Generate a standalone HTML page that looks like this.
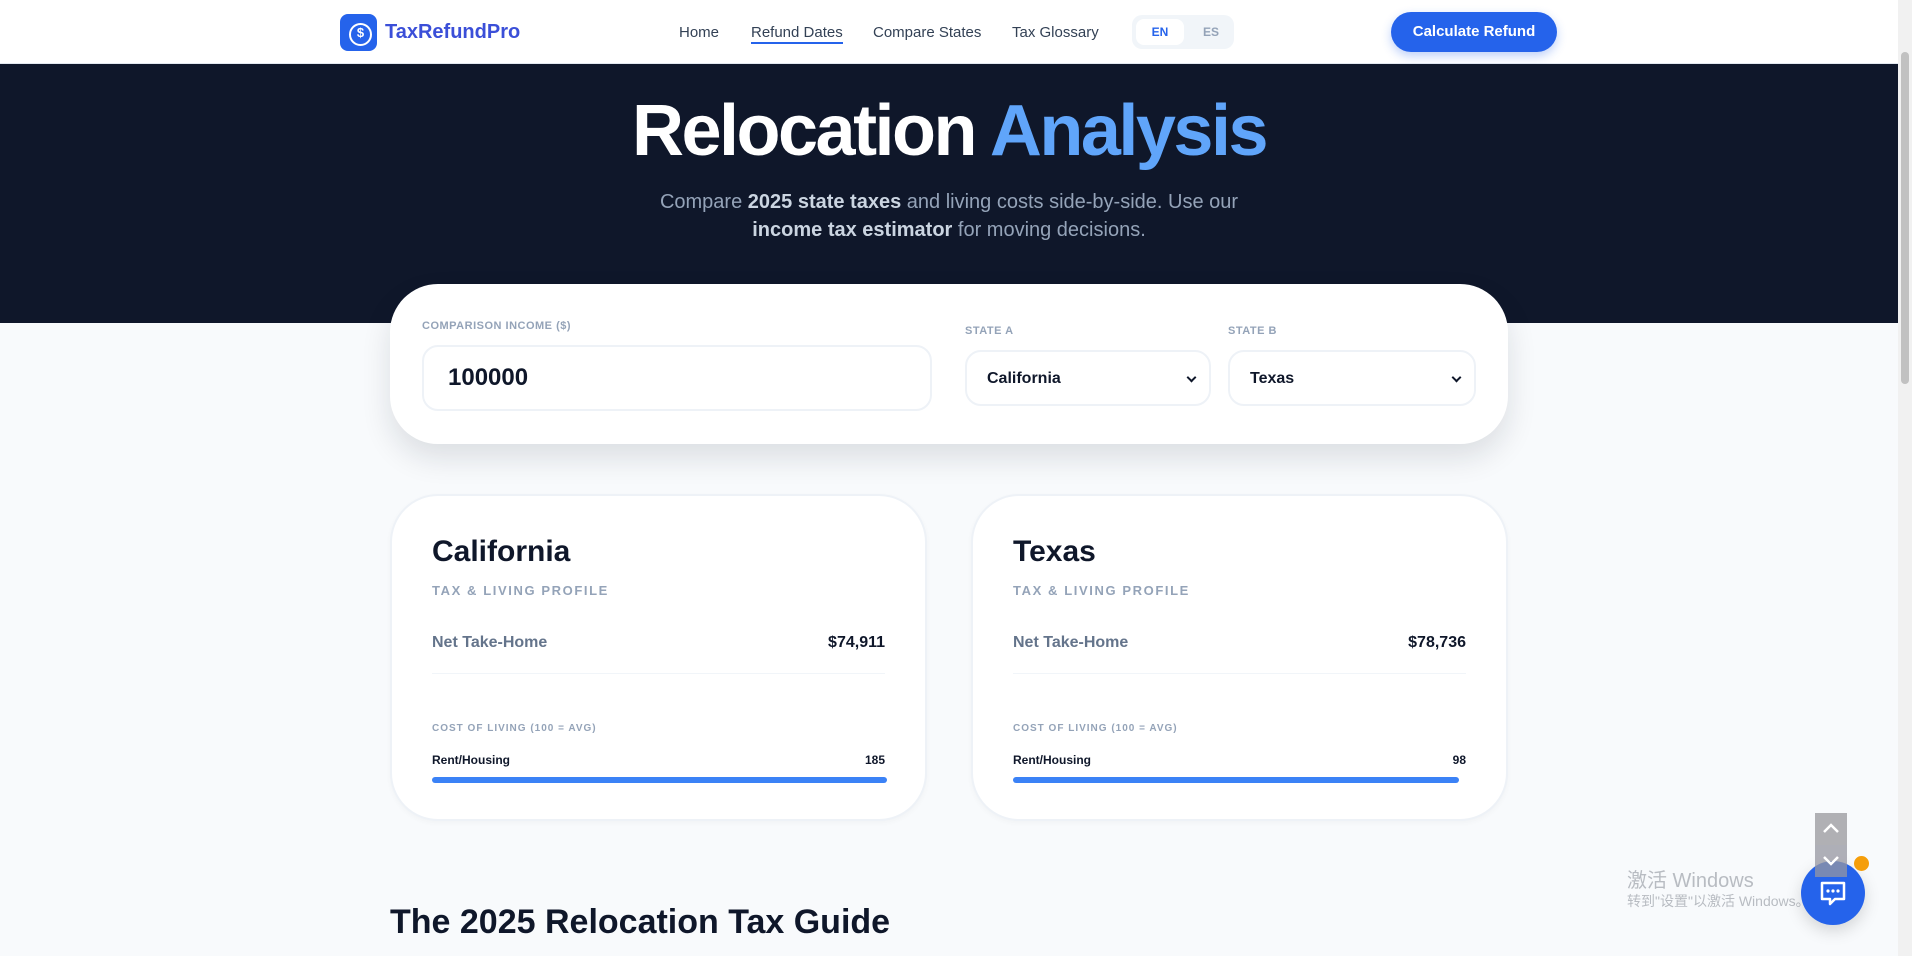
<!DOCTYPE html>
<html><head><meta charset="utf-8"><style>
*{box-sizing:border-box;margin:0;padding:0}
html,body{width:1912px;height:956px;overflow:hidden}
body{background:#f8fafc;font-family:"Liberation Sans","DejaVu Sans",sans-serif;color:#0f172a;position:relative}
.nav{position:absolute;left:0;top:0;width:1898px;height:64px;background:#fff;border-bottom:1px solid #e2e8f0}
.logo{position:absolute;left:340px;top:14px;width:37px;height:37px;background:#2563eb;border-radius:8px}
.logo:after{content:"$";position:absolute;left:9px;top:9px;width:19px;height:19px;border:2px solid #fff;border-radius:50%;color:#fff;font-size:13px;font-weight:700;text-align:center;line-height:15px}
.brand{position:absolute;left:385px;top:21px;font-size:20px;font-weight:700;color:#3b4fd8}
.links a{position:absolute;top:24px;font-size:15px;color:#334155;text-decoration:none}
.lang{position:absolute;left:1132px;top:15px;width:102px;height:34px;background:#f1f5f9;border-radius:10px}
.lang .en{position:absolute;left:4px;top:4px;width:48px;height:26px;background:#fff;border-radius:8px;color:#2563eb;font-size:12px;font-weight:700;text-align:center;line-height:26px}
.lang .es{position:absolute;left:62px;top:4px;width:34px;height:26px;color:#94a3b8;font-size:12px;font-weight:700;text-align:center;line-height:26px}
.btn{position:absolute;left:1391px;top:12px;width:166px;height:40px;background:#2563eb;border-radius:20px;color:#fff;font-size:15px;font-weight:700;text-align:center;line-height:40px;box-shadow:0 4px 10px rgba(37,99,235,.3)}
.hero{position:absolute;left:0;top:64px;width:1898px;height:259px;background:#0f172a}
h1{position:absolute;left:0;width:1898px;top:90px;text-align:center;font-size:72px;font-weight:800;color:#fff;letter-spacing:-2.5px}
h1 span{color:#60a5fa}
.sub{position:absolute;left:634px;width:630px;top:188px;text-align:center;font-size:20px;line-height:28px;color:#94a3b8}
.sub b{color:#cbd5e1}
.form{position:absolute;left:390px;top:284px;width:1118px;height:160px;background:#fff;border-radius:48px;box-shadow:0 14px 30px rgba(15,23,42,.12)}
.lbl{position:absolute;font-size:11px;font-weight:700;color:#94a3b8;letter-spacing:.5px}
.inp{position:absolute;background:#fff;border:2px solid #eef2f7;border-radius:16px;font-weight:700;color:#0f172a}
.sel:after{content:"";position:absolute;right:14px;top:22px;width:5px;height:5px;border-right:2px solid #0f172a;border-bottom:2px solid #0f172a;transform:rotate(45deg)}
.card{position:absolute;top:494px;width:537px;height:327px;background:#fff;border-radius:48px;border:2px solid #eef2f7;box-shadow:0 2px 6px rgba(0,0,0,.03)}
.card .t{position:absolute;left:40px;top:39px;font-size:30px;font-weight:700}
.card .s{position:absolute;left:40px;top:87px;font-size:13px;font-weight:700;color:#94a3b8;letter-spacing:1.6px}
.card .nl{position:absolute;left:40px;top:138px;font-size:16px;font-weight:700;color:#64748b}
.card .nv{position:absolute;right:40px;top:138px;font-size:16px;font-weight:700}
.card .hr{position:absolute;left:40px;right:40px;top:177px;height:1px;background:#f1f5f9}
.card .c{position:absolute;left:40px;top:227px;font-size:10px;font-weight:700;color:#94a3b8;letter-spacing:1px}
.card .rl{position:absolute;left:40px;top:257px;font-size:12px;font-weight:700}
.card .rv{position:absolute;right:40px;top:257px;font-size:12px;font-weight:700}
.card .bar{position:absolute;left:40px;top:281px;height:6px;background:#3b82f6;border-radius:3px}
h2{position:absolute;left:390px;top:903px;font-size:34px;font-weight:700;color:#0f172a}
.sb{position:absolute;right:0;top:0;width:14px;height:956px;background:#f1f1f1}
.sb:after{content:"";position:absolute;left:3px;top:52px;width:8px;height:332px;background:#c1c1c1;border-radius:4px}
.wm{position:absolute;left:1627px;color:#b8bcc2;font-family:"Liberation Sans","Noto Sans CJK SC",sans-serif}
</style></head><body>
<div class="nav">
<div class="logo"></div><div class="brand">TaxRefundPro</div>
<div class="links"><a style="left:679px">Home</a><a style="left:751px;border-bottom:2px solid #2563eb;padding-bottom:1px">Refund Dates</a><a style="left:873px">Compare States</a><a style="left:1012px">Tax Glossary</a></div>
<div class="lang"><div class="en">EN</div><div class="es">ES</div></div>
<div class="btn">Calculate Refund</div>
</div>
<div class="hero"></div>
<h1>Relocation <span>Analysis</span></h1>
<div class="sub">Compare <b>2025 state taxes</b> and living costs side-by-side. Use our<br><b>income tax estimator</b> for moving decisions.</div>
<div class="form">
<div class="lbl" style="left:32px;top:36px">COMPARISON INCOME ($)</div>
<div class="inp" style="left:32px;top:61px;width:510px;height:66px;font-size:24px;padding:17px 0 0 24px">100000</div>
<div class="lbl" style="left:575px;top:41px">STATE A</div>
<div class="inp sel" style="left:575px;top:66px;width:246px;height:56px;font-size:16px;padding:18px 0 0 20px">California</div>
<div class="lbl" style="left:838px;top:41px">STATE B</div>
<div class="inp sel" style="left:838px;top:66px;width:248px;height:56px;font-size:16px;padding:18px 0 0 20px">Texas</div>
</div>
<div class="card" style="left:390px"><div class="t">California</div><div class="s">TAX &amp; LIVING PROFILE</div><div class="nl">Net Take-Home</div><div class="nv">$74,911</div><div class="hr"></div><div class="c">COST OF LIVING (100 = AVG)</div><div class="rl">Rent/Housing</div><div class="rv">185</div><div class="bar" style="width:455px"></div></div>
<div class="card" style="left:971px"><div class="t">Texas</div><div class="s">TAX &amp; LIVING PROFILE</div><div class="nl">Net Take-Home</div><div class="nv">$78,736</div><div class="hr"></div><div class="c">COST OF LIVING (100 = AVG)</div><div class="rl">Rent/Housing</div><div class="rv">98</div><div class="bar" style="width:446px"></div></div>
<h2>The 2025 Relocation Tax Guide</h2>
<div class="wm" style="top:864px;font-size:20px">激活 Windows</div>
<div class="wm" style="top:891px;font-size:14px">转到"设置"以激活 Windows。</div>
<div style="position:absolute;left:1801px;top:861px;width:64px;height:64px;border-radius:50%;background:#2563eb;box-shadow:0 6px 16px rgba(0,0,0,.15)">
<svg width="64" height="64" viewBox="0 0 64 64"><path d="M21 22h22v16H34l-5 5v-5h-8z" fill="none" stroke="#fff" stroke-width="2.5" stroke-linejoin="round"/><circle cx="27" cy="30" r="1.6" fill="#fff"/><circle cx="32" cy="30" r="1.6" fill="#fff"/><circle cx="37" cy="30" r="1.6" fill="#fff"/></svg></div>
<div style="position:absolute;left:1854px;top:856px;width:15px;height:15px;border-radius:50%;background:#f59e0b"></div>
<div style="position:absolute;left:1815px;top:813px;width:32px;height:32px;background:#b0b0b4"><svg width="32" height="32"><path d="M9 19l7-7 7 7" fill="none" stroke="#fff" stroke-width="2.5"/></svg></div>
<div style="position:absolute;left:1815px;top:845px;width:32px;height:32px;background:rgba(150,150,160,.75)"><svg width="32" height="32"><path d="M9 12l7 7 7-7" fill="none" stroke="#fff" stroke-width="2.5"/></svg></div>
<div class="sb"></div>
</body></html>
